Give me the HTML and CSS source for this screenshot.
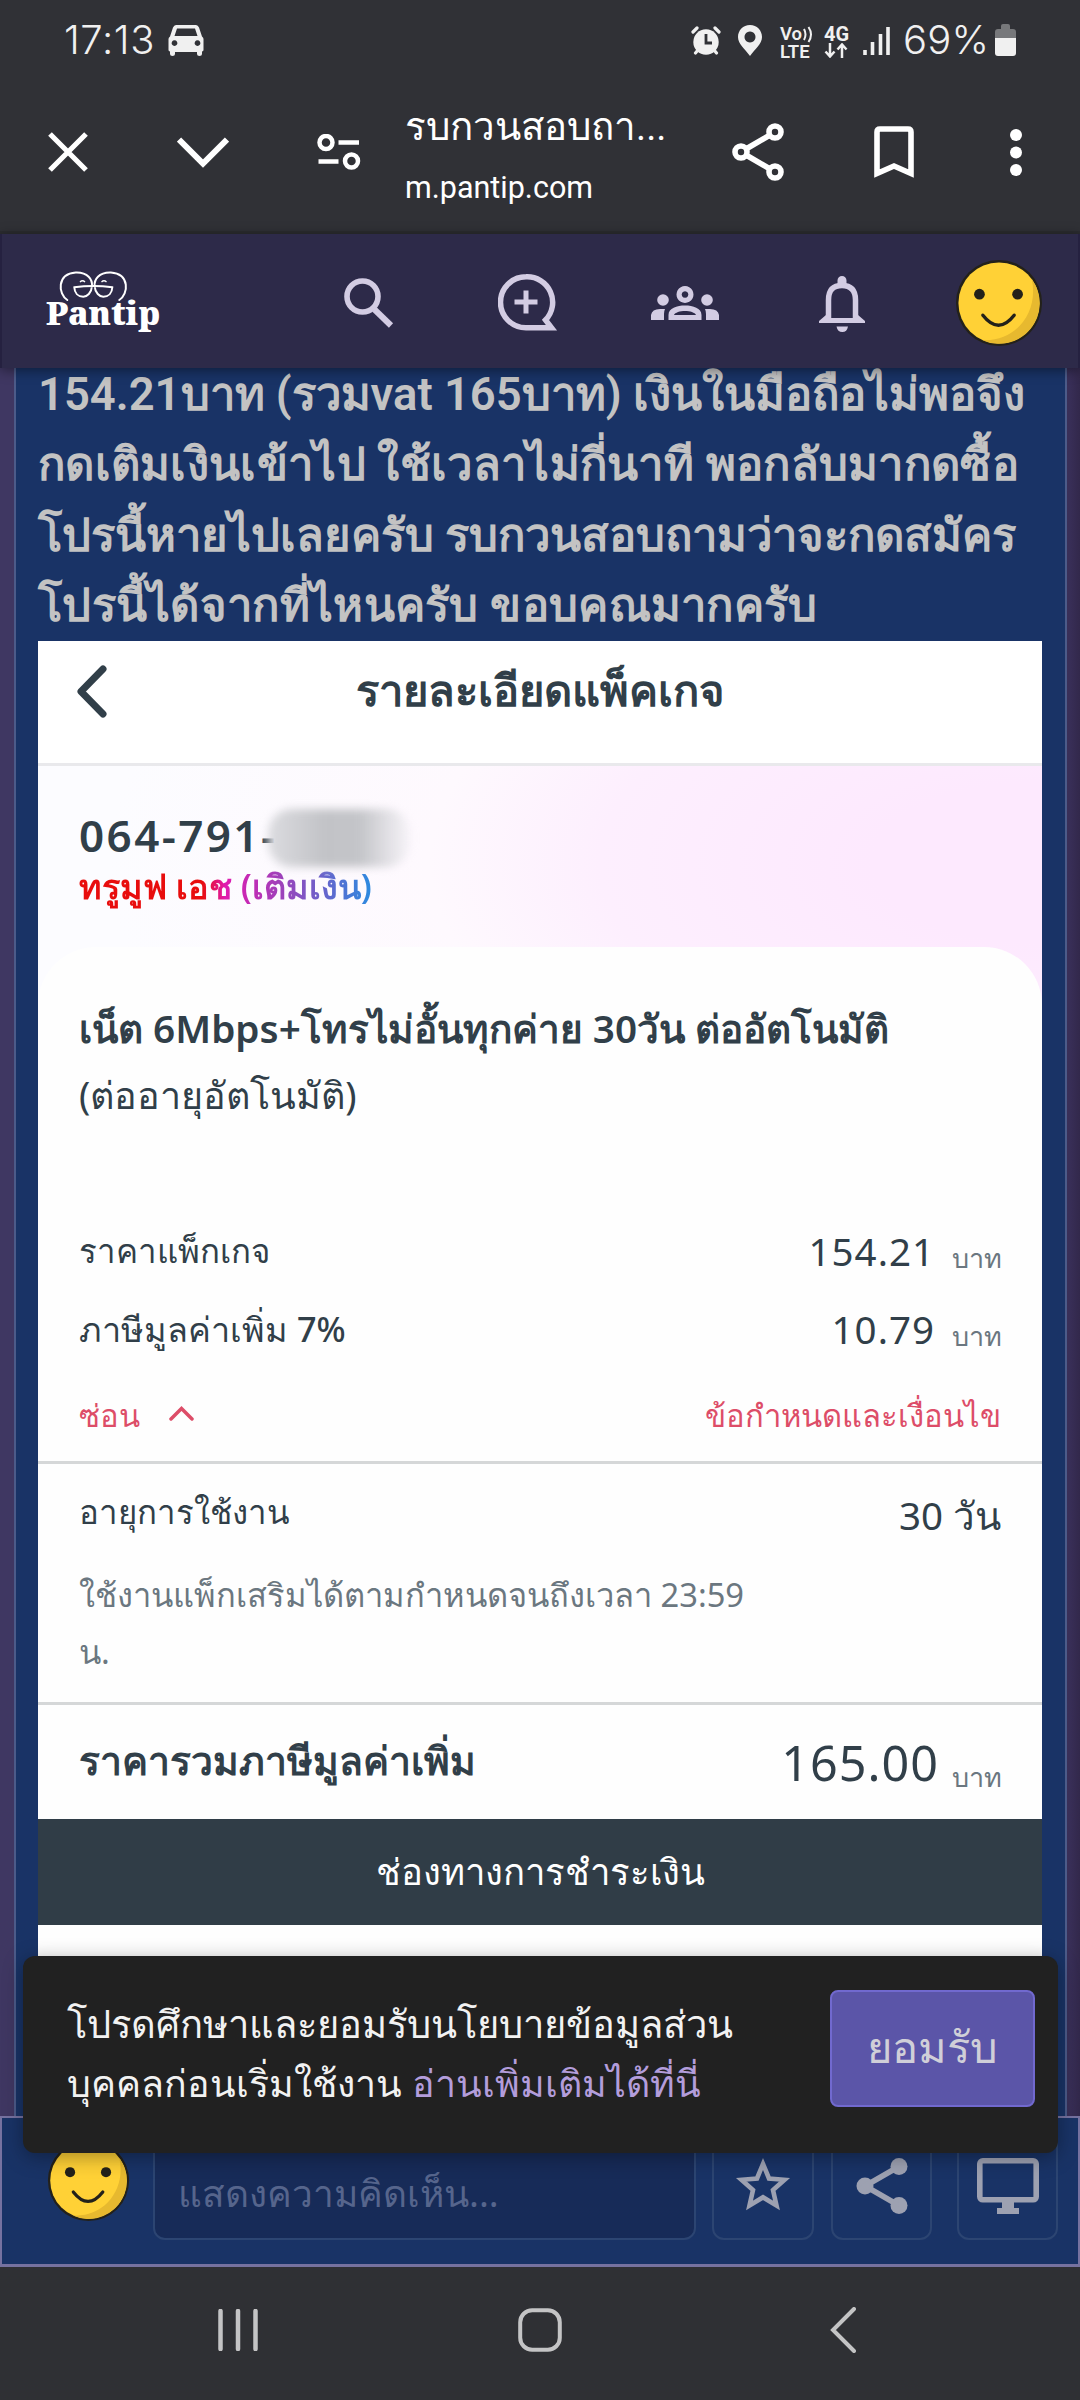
FILE: index.html
```html
<!DOCTYPE html>
<html lang="th">
<head>
<meta charset="utf-8">
<title>Pantip</title>
<link rel="stylesheet" href="styles.css">
</head>
<body>
<div class="screen">
  <div class="status">
    <span class="clock">17:13</span>
    <svg class="car" width="36" height="31" viewBox="0 0 36 31"><path fill="#f0f0f0" fill-rule="evenodd" d="M8 0H28Q30 0 31 2.5L34 11.500Q35.500 12.500 35.500 14V25Q35.500 26 34 26.500V29Q34 31 31.500 31Q29 31 29 29V27H7V29Q7 31 4.500 31Q2 31 2 29V26.500Q.5 26 .5 25V14Q.5 12.500 2 11.500L5 2.500Q6 0 8 0ZM9 3.500L6.500 11H29.500L27 3.500ZM6.500 15.200a2.900 2.900 0 1 0 .01 0ZM29.500 15.200a2.900 2.900 0 1 0 .01 0Z"/></svg>
    <div class="status-right">
      <svg width="30" height="31" viewBox="0 0 30 31"><g fill="none" stroke="#f0f0f0" stroke-width="3.200" stroke-linecap="round"><path d="M2 7L6 3M28 7L24 3M4.500 28L7 25M25.500 28L23 25"/></g><circle cx="15" cy="17" r="12.700" fill="#f0f0f0"/><path d="M15 9v9h6" fill="none" stroke="#303136" stroke-width="2.800"/></svg>
      <svg class="pin" width="24" height="31" viewBox="0 0 24 31"><path fill="#f0f0f0" fill-rule="evenodd" d="M12 0C5 0 0 5.500 0 12C0 19 7 24 12 31C17 24 24 19 24 12C24 5.500 19 0 12 0ZM12 6.500a5.500 5.500 0 1 1-.01 0Z"/></svg>
      <div class="volte"><span>Vo<svg width="11" height="17" viewBox="0 0 11 17"><path d="M2 3Q5 8.500 2 14M6.500 1Q11.500 8.500 6.500 16" fill="none" stroke="#f0f0f0" stroke-width="2"/></svg></span><span>LTE</span></div>
      <div class="net"><span>4G</span><svg width="24" height="15" viewBox="0 0 24 15"><path d="M6 0V13M1.500 8.500L6 13.500L10.500 8.500M18 15V2M13.500 6.500L18 1.500L22.500 6.500" fill="none" stroke="#f0f0f0" stroke-width="2.500"/></svg></div>
      <svg class="signal" width="28" height="30" viewBox="0 0 28 30"><path d="M2 24V29M9.500 16V29M17.500 8V29M25 1V29" stroke="#f0f0f0" stroke-width="3.600"/></svg>
      <span class="pct">69%</span>
      <svg class="batt" width="21" height="32" viewBox="0 0 21 32"><path fill="#77787b" d="M6 2Q6 0 8 0H13Q15 0 15 2V5H18Q21 5 21 8V14H0V8Q0 5 3 5H6Z"/><path fill="#f0f0f0" d="M0 14H21V29Q21 32 18 32H3Q0 32 0 29Z"/></svg>
    </div>
  </div>

  <div class="toolbar">
    <svg class="t-close" width="40" height="40" viewBox="0 0 40 40"><path d="M2 2L38 38M38 2L2 38" stroke="#fff" stroke-width="5.200"/></svg>
    <svg class="t-down" width="52" height="31" viewBox="0 0 52 31"><path d="M2 2.500L26 26.500L50 2.500" fill="none" stroke="#fff" stroke-width="6"/></svg>
    <svg class="t-tune" width="44" height="36" viewBox="0 0 44 36"><g fill="none" stroke="#fff" stroke-width="4.500"><circle cx="9" cy="8.500" r="6.500"/><circle cx="34.500" cy="27" r="6.500"/><path d="M21.500 8.500H42M1.500 27.500H21.500"/></g></svg>
    <div class="addr"><div class="addr-title">รบกวนสอบถา...</div><div class="addr-url">m.pantip.com</div></div>
    <svg class="t-share" width="52" height="58" viewBox="0 0 52 58"><g fill="none" stroke="#fff" stroke-width="5.600"><circle cx="43" cy="9" r="6"/><circle cx="9" cy="29" r="6"/><circle cx="43" cy="49" r="6"/><path d="M14 26L38 12M14 32L38 46"/></g></svg>
    <svg class="t-mark" width="40" height="52" viewBox="0 0 40 52"><path d="M3 47.500V6Q3 3 6 3H34Q37 3 37 6V47.500L20 40Z" fill="none" stroke="#fff" stroke-width="5.600"/></svg>
    <svg class="t-dots" width="12" height="47" viewBox="0 0 12 47"><g fill="#fff"><circle cx="6" cy="6" r="6"/><circle cx="6" cy="23.500" r="6"/><circle cx="6" cy="41" r="6"/></g></svg>
  </div>

  <header class="site">
    <div class="logo">
      <svg width="72" height="32" viewBox="0 0 72 32"><path d="M9.300 29C0 23 -1.500 3 17.700 1.500C30 1 34.500 9 34 15C33.500 22 29 25.700 25.300 25.700C20 25.700 16.500 22 16.300 16.300Q35.300 13.500 54.300 16.300C54.100 22 50.600 25.700 45.300 25.700C41.600 25.700 37.100 22 36.600 15C36.100 9 40.600 1 52.900 1.500C72.100 3 70.600 23 61.300 29" fill="none" stroke="#fff" stroke-width="2" stroke-linecap="round"/><path d="M22 11q2.500-2.500 5 0M43.500 11q2.500-2.500 5 0" fill="none" stroke="#fff" stroke-width="1.300"/></svg>
      <div class="logo-word">Pantip</div>
    </div>
    <svg class="h-search" width="50" height="51" viewBox="0 0 50 51"><circle cx="18.500" cy="19.500" r="15.500" fill="none" stroke="#d3cce3" stroke-width="5.600"/><path d="M30.500 32.500L47 48.500" stroke="#d3cce3" stroke-width="6"/></svg>
    <svg class="h-plus" width="62" height="57" viewBox="0 0 62 57"><path d="M28 2.800A25.500 25.500 0 1 0 28 53.800H53.500L47.500 46A25.500 25.500 0 0 0 28 2.800Z" fill="none" stroke="#d3cce3" stroke-width="5.500"/><path d="M28 16.500V39.500M16.500 28H39.500" stroke="#d3cce3" stroke-width="5"/></svg>
    <svg class="h-group" width="68" height="34" viewBox="0 0 68 34"><g fill="#d3cce3"><circle cx="12" cy="14" r="5.800"/><circle cx="56" cy="14" r="5.800"/><path d="M0 34V29Q1 23 9 23H14Q13 25 13 28V34ZM68 34V29Q67 23 59 23H54Q55 25 55 28V34Z"/><path fill-rule="evenodd" d="M34 0a8.500 8.500 0 1 1-.01 0ZM34 5.200a3.300 3.300 0 1 0 .01 0ZM17.500 34V29C17.500 22 26 19.500 34 19.500S50.500 22 50.500 29V34ZM23 29H45C44 26.500 39 25 34 25S24 26.500 23 29Z"/></g></svg>
    <svg class="h-bell" width="46" height="56" viewBox="0 0 46 56"><path d="M9.500 44V24Q9.500 9.500 23 9.500T36.500 24V44" fill="none" stroke="#d3cce3" stroke-width="5.500"/><path fill="#d3cce3" d="M18.500 8V4.500a4.500 4.500 0 0 1 9 0V8ZM0 47V45L7 39V42H39V39L46 45V47ZM17.500 50.500H29Q28 56 23.300 56T17.500 50.500Z"/></svg>
    <svg class="face" width="88" height="90" viewBox="0 0 90 90"><circle cx="45" cy="45" r="44" fill="#23211a"/><circle cx="45" cy="45" r="41.500" fill="#ffd136"/><path d="M78.500 20.500A41.500 41.500 0 0 1 28 83C62 85 86 55 78.500 20.500Z" fill="#e7b92f"/><circle cx="25" cy="36" r="5.500" fill="#23211a"/><circle cx="64" cy="36" r="5.500" fill="#23211a"/><path d="M28.500 57.500Q44.500 78 60.500 57.500" fill="none" stroke="#23211a" stroke-width="3.500" stroke-linecap="round"/></svg>
  </header>

  <main class="page">
    <article class="post">
      <p class="post-text"><span>154.21บาท (รวมvat 165บาท) เงินในมือถือไม่พอจึง</span><span class="wide">กดเติมเงินเข้าไป ใช้เวลาไม่กี่นาที พอกลับมากดซื้อ</span><span>โปรนี้หายไปเลยครับ รบกวนสอบถามว่าจะกดสมัคร</span><span class="wide">โปรนี้ได้จากที่ไหนครับ ขอบคณมากครับ</span></p>
      <section class="pkg">
        <div class="pkg-head">
          <svg width="30" height="53" viewBox="0 0 30 53"><path d="M26 4L4 26.500L26 49" fill="none" stroke="#313f49" stroke-width="7" stroke-linecap="round" stroke-linejoin="round"/></svg>
          <h1>รายละเอียดแพ็คเกจ</h1>
        </div>
        <div class="hero">
          <div class="phone"><span>064-791-</span><i class="smudge"></i></div>
          <div class="carrier"><span>ทรูมูฟ เอช (เติมเงิน)</span></div>
        </div>
        <div class="sheet">
          <div class="name">เน็ต 6Mbps+โทรไม่อั้นทุกค่าย 30วัน ต่ออัตโนมัติ</div>
          <div class="renew">(ต่ออายุอัตโนมัติ)</div>
          <div class="row r-price"><span class="lab">ราคาแพ็กเกจ</span><span class="num">154.21</span><span class="unit">บาท</span></div>
          <div class="row r-vat"><span class="lab">ภาษีมูลค่าเพิ่ม 7%</span><span class="num">10.79</span><span class="unit">บาท</span></div>
          <div class="row r-link"><span class="hide">ซ่อน</span><svg width="25" height="15" viewBox="0 0 25 15"><path d="M2 13L12.500 2.500L23 13" fill="none" stroke="#dd4d68" stroke-width="3.500" stroke-linecap="round"/></svg><span class="terms">ข้อกำหนดและเงื่อนไข</span></div>
          <div class="row r-period"><span class="lab">อายุการใช้งาน</span><span class="days">30 วัน</span></div>
          <div class="note"><span>ใช้งานแพ็กเสริมได้ตามกำหนดจนถึงเวลา 23:59</span><br>น.</div>
          <div class="row r-total"><span class="lab">ราคารวมภาษีมูลค่าเพิ่ม</span><span class="num">165.00</span><span class="unit">บาท</span></div>
          <div class="paybar"><span>ช่องทางการชำระเงิน</span></div>
        </div>
      </section>
    </article>
  </main>

  <footer class="reply">
    <svg class="face" width="83" height="83" viewBox="0 0 90 90"><circle cx="45" cy="45" r="44" fill="#23211a"/><circle cx="45" cy="45" r="41.500" fill="#ffd136"/><path d="M78.500 20.500A41.500 41.500 0 0 1 28 83C62 85 86 55 78.500 20.500Z" fill="#e7b92f"/><circle cx="25" cy="36" r="5.500" fill="#23211a"/><circle cx="64" cy="36" r="5.500" fill="#23211a"/><path d="M28.500 57.500Q44.500 78 60.500 57.500" fill="none" stroke="#23211a" stroke-width="3.500" stroke-linecap="round"/></svg>
    <div class="field"><span>แสดงความคิดเห็น...</span></div>
    <div class="btn b1"><svg width="56" height="54" viewBox="0 0 56 54"><path d="M28 6L34 20.500L49.500 21.800L38 32L41.500 47.500L28 39.300L14.500 47.500L18 32L6.500 21.800L22 20.500Z" fill="none" stroke="#9da1b1" stroke-width="4.600"/></svg></div>
    <div class="btn b2"><svg width="52" height="56" viewBox="0 0 52 56"><g fill="#9da1b1"><circle cx="43" cy="8.500" r="8.500"/><circle cx="9" cy="28" r="8.500"/><circle cx="43" cy="47.500" r="8.500"/></g><path d="M43 8.500L9 28L43 47.500" fill="none" stroke="#9da1b1" stroke-width="5.500"/></svg></div>
    <div class="btn b3"><svg width="62" height="56" viewBox="0 0 62 56"><rect x="2.800" y="2.800" width="56.400" height="39" rx="3" fill="none" stroke="#9da1b1" stroke-width="5.600"/><path d="M25 43H37V50H42V56H20V50H25Z" fill="#9da1b1"/></svg></div>
  </footer>

  <nav class="sysnav">
    <svg width="40" height="42" viewBox="0 0 40 42"><path d="M2.500 2V40M20 2V40M37.500 2V40" stroke="#c4c4c5" stroke-width="4.500" stroke-linecap="round"/></svg>
    <svg width="44" height="44" viewBox="0 0 44 44"><rect x="2.200" y="2.200" width="39.600" height="39.600" rx="12" fill="none" stroke="#c4c4c5" stroke-width="4"/></svg>
    <svg width="26" height="46" viewBox="0 0 26 46"><path d="M24 2L3 23L24 44" fill="none" stroke="#c4c4c5" stroke-width="4" stroke-linecap="round"/></svg>
  </nav>

  <div class="consent">
    <p><span class="lead">โปรดศึกษาและยอมรับนโยบายข้อมูลส่วน</span><br><span>บุคคลก่อนเริ่มใช้งาน</span> <a class="more">อ่านเพิ่มเติมได้ที่นี่</a></p>
    <button>ยอมรับ</button>
  </div>
</div>
</body>
</html>
```
FILE: styles.css
```css
* { box-sizing: border-box; margin: 0; padding: 0; }
body { background: #2f3034; font-family: "Noto Sans", sans-serif; }
svg { display: block; flex: none; }
span, h1, .name, .renew { white-space: nowrap; }
.screen { position: relative; width: 1080px; height: 2400px; overflow: hidden; display: flex; flex-direction: column; }

.status { height: 80px; background: #303136; color: #f0f0f0; display: flex; align-items: flex-start; padding: 25px 64px 0 64px; font-family: Inter, sans-serif; }
.clock { font-size: 40px; font-weight: 350; line-height: 30px; width: 104px; letter-spacing: .6px; }
.status-right { margin-left: auto; display: flex; align-items: flex-start; }
.pin { margin-left: 17px; }
.volte { width: 32px; margin-left: 18px; display: flex; flex-direction: column; font: 600 18.500px/18px Roboto, sans-serif; }
.volte span { display: flex; align-items: center; }
.net { width: 26px; margin-left: 12px; display: flex; flex-direction: column; font: 700 20px/18px Roboto, sans-serif; }
.signal { margin: 1px 0 0 13px; }
.pct { font-size: 40px; font-weight: 350; line-height: 30px; width: 92px; margin-left: 12px; letter-spacing: .2px; }
.batt { margin-top: -1px; }

.toolbar { height: 154px; background: #303136; border-bottom: 3px solid #2b2c30; display: flex; align-items: flex-start; padding: 0 58px 0 48px; }
.t-close { margin-top: 52px; }
.t-down { margin: 57px 0 0 89px; }
.t-tune { margin: 54px 0 0 88px; }
.addr { width: 277px; margin: 19px 0 0 44px; color: #fff; font-family: Roboto, sans-serif; white-space: nowrap; }
.addr-title { font-size: 38.500px; line-height: 56px; }
.addr-url { font-size: 30.500px; line-height: 65px; }
.t-share { margin: 43px 0 0 51px; }
.t-mark { margin: 46px 0 0 90px; }
.t-dots { margin: 49px 0 0 96px; }

.site { height: 134px; flex: none; position: relative; z-index: 2; background: #2d2a49; border: solid #252140; border-width: 0 2px; box-shadow: 0 2px 12px rgba(0,0,0,.45); display: flex; align-items: flex-start; padding-left: 44px; }
.logo { width: 116px; margin-top: 37px; color: #fff; }
.logo svg { margin-left: 12px; }
.logo-word { font: 900 33px/44px "Noto Serif", "Liberation Serif", serif; margin-top: -12px; }
.h-search { margin: 43px 0 0 182px; }
.h-plus { margin: 40px 0 0 104px; }
.h-group { margin: 52px 0 0 91px; }
.h-bell { margin: 42px 0 0 100px; }
.site .face { margin: 24px 0 0 90px; }

.page { height: 1748px; flex: none; padding: 0 13px 0 14px; background: linear-gradient(90deg, #3f3762, #3f3762 50%, #392f58 99%, #32284b); }
.post { height: 1748px; overflow: hidden; background: #193366; border: solid #4c5b89; border-width: 0 2px; padding: 0 23px 0 22px; }
.post-text { margin-top: -8px; font: 600 45.400px/70.300px Roboto, sans-serif; color: #c3c3c3; }
.post-text span { display: block; }
.post-text .wide { letter-spacing: .3px; }

.pkg { width: 1004px; height: 1330px; background: #fefefe; color: #313f49; }
.pkg-head { height: 125px; border-bottom: 3px solid #e9e9ec; display: grid; grid-template-columns: 1fr auto 1fr; padding-left: 39px; padding-right: 39px; background: #fff; }
.pkg-head svg { margin-top: 24px; }
.pkg-head h1 { font-size: 43.500px; line-height: 97px; font-weight: 600; }
.hero { height: 241px; padding: 42px 41px 0; background: radial-gradient(ellipse 850px 400px at 100% 40%, #fde9fe 20%, #fdeffe 52%, #fef9fe 72%, #fcfcff 110%); }
.phone { display: flex; font-size: 44px; line-height: 54px; font-weight: 600; letter-spacing: 2.400px; }
.smudge { width: 142px; height: 58px; margin: 1px 0 -5px -9px; border-radius: 24px; background: linear-gradient(90deg, #dcdce0, #c2c3c7 40%, #c4c5c9 65%, rgba(225,225,230,.3) 98%); filter: blur(4px); }
.carrier { font-size: 34.200px; line-height: 48px; font-weight: 600; }
.carrier span { background: linear-gradient(90deg, #e80d0d 42%, #e01ab0 50%, #9a44bb 70%, #2b8be0 100%); -webkit-background-clip: text; background-clip: text; color: transparent; display: inline-block; }
.sheet { margin-top: -60px; background: #fefefe; border-radius: 58px 58px 0 0; padding-top: 51px; }
.name { padding-left: 41px; font-size: 38.700px; line-height: 60px; font-weight: 600; }
.renew { padding-left: 41px; margin-top: 7px; font-size: 37.700px; line-height: 60px; }
.row { display: flex; align-items: flex-start; line-height: 60px; padding: 0 41px; font-size: 33px; height: 60px; }
.lab { font-weight: 500; margin-right: auto; }
.r-vat .lab { font-size: 34.200px; }
.num { font-size: 38.500px; font-weight: 450; letter-spacing: 1px; }
.unit { width: 49px; margin-left: 17px; padding-top: 7px; font-size: 27px; color: #6b7780; }
.r-price { margin-top: 96px; }
.r-vat { margin-top: 18px; }
.r-link { margin-top: 26px; height: 79px; border-bottom: 3px solid #d5d7d8; color: #dd4d68; font-size: 31px; }
.r-link svg { margin: 21px auto 0 29px; }
.r-period { margin-top: 18px; }
.days { font-size: 38.500px; padding-top: 3px; font-weight: 450; }
.note { margin-top: 24px; height: 139px; padding-left: 41px; border-bottom: 3px solid #d5d7d8; font-size: 32.700px; line-height: 57px; color: #6b7780; }
.r-total { margin-top: 26px; }
.r-total .lab { font-size: 39px; line-height: 58px; font-weight: 600; }
.r-total .num { font-size: 48.500px; line-height: 62px; }
.r-total .unit { margin-left: 13px; padding-top: 16px; }
.paybar { margin-top: 28px; height: 106px; background: #303d47; color: #fff; text-align: center; font-size: 36.500px; line-height: 105px; font-weight: 500; }

.reply { height: 151px; flex: none; background: #193366; border: 2px solid #7672a0; border-bottom: 3px solid #7672a0; display: flex; align-items: flex-start; padding-left: 45px; }
.reply .face { margin-top: 21px; }
.field { width: 543px; height: 122px; margin-left: 23px; border: 2px solid #2c4572; border-radius: 12px; background: #172b58; color: #56658c; font-size: 37px; line-height: 146px; padding-left: 23px; }
.btn { height: 122px; border: 2px solid #2c4572; border-radius: 12px; display: flex; justify-content: center; align-items: flex-start; padding-top: 38px; }
.b1 { width: 102px; margin-left: 16px; }
.b2 { width: 101px; margin-left: 17px; }
.b3 { width: 101px; margin-left: 25px; }

.sysnav { flex: 1; background: #2f3034; display: grid; grid-template-columns: 40px 44px 26px; column-gap: 260px; padding-left: 218px; padding-top: 42px; }
.sysnav svg:nth-child(2) { margin-top: -1px; }
.sysnav svg:nth-child(3) { margin: -2px 0 0 8px; }

.consent { position: absolute; z-index: 3; left: 23px; top: 1956px; width: 1035px; height: 197px; border-radius: 12px; background: #212121; color: #f2f2f2; box-shadow: 0 4px 20px rgba(0,0,0,.35); display: flex; justify-content: space-between; padding: 34px 23px 0 44px; }
.consent p { font-size: 37.500px; line-height: 59px; white-space: nowrap; margin-top: 4px; }
.lead { font-size: 38.100px; }
.more { color: #b39ddb; }
.consent button { width: 205px; height: 117px; border: 2px solid #7169cf; border-radius: 8px; background: #5b55a8; color: #d0cfd8; padding-bottom: 5px; font: 400 43.500px/100px "Noto Sans", sans-serif; }
```
